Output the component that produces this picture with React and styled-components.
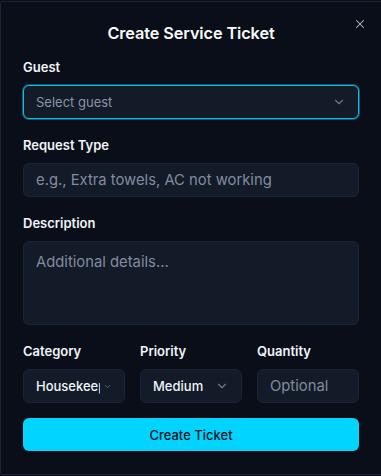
import React from "react";
import styled, { createGlobalStyle } from "styled-components";

const GlobalStyle = createGlobalStyle`
  html, body {
    margin: 0;
    padding: 0;
    background: #0a0e18;
    overflow: hidden;
  }
  body {
    font-family: Inter, "Noto Sans", sans-serif;
    color: #f5f7fa;
  }
  * {
    box-sizing: border-box;
  }
`;

const Dialog = styled.div`
  position: relative;
  width: 384px;
  margin-top: 1px;
  height: 474px;
  background: #0a0e18;
  border: 1px solid #1c2332;
  border-radius: 2px;
  padding: 19px 24px 23px 22px;
  display: flex;
  flex-direction: column;
`;

const Title = styled.h2`
  margin: 0;
  font-size: 16.3px;
  line-height: 24px;
  font-weight: 600;
  text-align: center;
  color: #f8fafc;
  letter-spacing: -0.1px;
`;

const CloseButton = styled.button`
  position: absolute;
  top: 14px;
  right: 15px;
  width: 16px;
  height: 16px;
  padding: 0;
  border: none;
  background: transparent;
  color: #b7bcc6;
  display: flex;
  align-items: center;
  justify-content: center;
`;

const Form = styled.form`
  margin-top: 12px;
  display: flex;
  flex-direction: column;
  gap: 16px;
`;

const Field = styled.div`
  display: flex;
  flex-direction: column;
  gap: 8px;
  min-width: 0;
`;

const Label = styled.label`
  font-size: 13px;
  line-height: 20px;
  font-weight: 600;
  color: #f1f4f8;
`;

const boxBase = `
  width: 100%;
  background: #131a28;
  border: 1px solid #1b2334;
  border-radius: 6px;
  font-family: Inter, "Noto Sans", sans-serif;
  outline: none;
`;

const SelectBox = styled.div`
  ${boxBase}
  height: 34px;
  display: flex;
  align-items: center;
  gap: 3px;
  padding: 0 12px;
  font-size: 13px;
  font-weight: ${(p) => (p.$placeholder ? 400 : 500)};
  color: ${(p) => (p.$placeholder ? "#8a94a6" : "#f1f4f8")};
  border-color: ${(p) => (p.$focused ? "#18b8d8" : "#1b2334")};
  box-shadow: ${(p) => (p.$focused ? "0 0 0 1px #0e5d70" : "none")};
`;

const SelectText = styled.span`
  flex: 1;
  min-width: 0;
  overflow: hidden;
  white-space: nowrap;
`;

const Chevron = styled.svg`
  flex: none;
  color: #6f7888;
`;

const TextInput = styled.input`
  ${boxBase}
  height: 34px;
  padding: 0 12px;
  font-size: 14.8px;
  color: #f1f4f8;
  &::placeholder {
    color: #828c9f;
  }
`;

const TextArea = styled.textarea`
  ${boxBase}
  height: 84px;
  padding: 8px 12px;
  resize: none;
  font-size: 14.8px;
  line-height: 24px;
  color: #f1f4f8;
  &::placeholder {
    color: #828c9f;
  }
`;

const Row = styled.div`
  display: grid;
  grid-template-columns: 1fr 1fr 1fr;
  gap: 15px;
`;

const SubmitButton = styled.button`
  margin-top: -1px;
  height: 33px;
  border: none;
  border-radius: 6px;
  background: #00d4ff;
  color: #0a1220;
  font-family: Inter, "Noto Sans", sans-serif;
  font-size: 13px;
  font-weight: 500;
`;

function ChevronDown({ size = 10 }) {
  return (
    <Chevron width={size} height={size} viewBox="0 0 24 24" fill="none" stroke="currentColor" strokeWidth="2" strokeLinecap="round" strokeLinejoin="round">
      <path d="m6 9 6 6 6-6" />
    </Chevron>
  );
}

export default function App() {
  return (
    <>
      <GlobalStyle />
      <Dialog>
        <Title>Create Service Ticket</Title>
        <CloseButton aria-label="Close">
          <svg width="14" height="14" viewBox="0 0 24 24" fill="none" stroke="currentColor" strokeWidth="1.8" strokeLinecap="round">
            <path d="M18 6 6 18" />
            <path d="m6 6 12 12" />
          </svg>
        </CloseButton>
        <Form onSubmit={(e) => e.preventDefault()}>
          <Field>
            <Label>Guest</Label>
            <SelectBox $placeholder $focused>
              <SelectText>Select guest</SelectText>
              <ChevronDown size={14} />
            </SelectBox>
          </Field>
          <Field>
            <Label>Request Type</Label>
            <TextInput placeholder="e.g., Extra towels, AC not working" />
          </Field>
          <Field>
            <Label>Description</Label>
            <TextArea placeholder="Additional details..." />
          </Field>
          <Row>
            <Field>
              <Label>Category</Label>
              <SelectBox>
                <SelectText>Housekeeping</SelectText>
                <ChevronDown size={9} />
              </SelectBox>
            </Field>
            <Field>
              <Label>Priority</Label>
              <SelectBox>
                <SelectText>Medium</SelectText>
                <ChevronDown size={14} />
              </SelectBox>
            </Field>
            <Field>
              <Label>Quantity</Label>
              <TextInput placeholder="Optional" />
            </Field>
          </Row>
          <SubmitButton type="submit">Create Ticket</SubmitButton>
        </Form>
      </Dialog>
    </>
  );
}
